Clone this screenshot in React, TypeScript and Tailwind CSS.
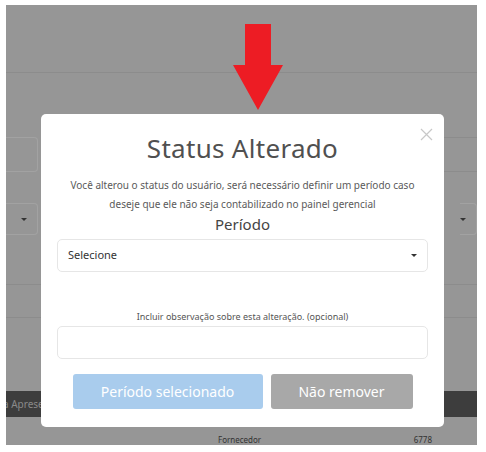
import React from "react";

export default function App() {
  const font = { fontFamily: "'Noto Sans', 'Open Sans', sans-serif" };
  return (
    <div className="relative w-[486px] h-[452px] bg-white overflow-hidden" style={font}>
      {/* backdrop page */}
      <div className="ml-[6px] mt-[5px] w-[471px] h-[440px] bg-[#969696] flex flex-col overflow-hidden">
        <div className="h-[68px] border-b border-[#8c8c8c] shrink-0" />
        <div className="h-[64px] shrink-0" />
        <div className="h-[35px] shrink-0 flex justify-between">
          <div className="w-[32px] h-full rounded-r-[4px] border border-l-0 border-[#a2a2a2]" />
          <div className="w-[33px] h-full border-y border-[#8c8c8c]" />
        </div>
        <div className="h-[31px] shrink-0" />
        <div className="h-[32px] shrink-0 flex justify-between">
          <div className="w-[32px] h-full rounded-r-[4px] border border-l-0 border-[#a2a2a2] flex items-center justify-end pr-[10px]">
            <span className="block w-0 h-0 border-l-[3px] border-r-[3px] border-t-[3px] border-l-transparent border-r-transparent border-t-[#333]" />
          </div>
          <div className="w-[17px] h-full rounded-r-[4px] border border-l-0 border-[#a2a2a2] flex items-center justify-start">
            <span className="block w-0 h-0 border-l-[3px] border-r-[3px] border-t-[3px] border-l-transparent border-r-transparent border-t-[#333]" />
          </div>
        </div>
        <div className="h-[50px] shrink-0 border-b border-[#8c8c8c]" />
        <div className="h-[33px] shrink-0 border-b border-[#8c8c8c]" />
        <div className="h-[73px] shrink-0" />
        <div className="h-[26px] shrink-0 bg-[#3d3d3d] flex items-center text-[10px] text-[#8a8a8a]">
          <span className="-ml-[3px]">a Apresentação</span>
        </div>
        <div className="h-[19px] shrink-0" />
        <div className="flex text-[8px] text-[#333] leading-[8px]">
          <span className="ml-[212px]">Fornecedor</span>
          <span className="ml-auto mr-[45px]">6778</span>
        </div>
      </div>

      {/* red arrow */}
      <svg className="absolute left-0 top-0" width="486" height="120" viewBox="0 0 486 120">
        <polygon points="245,24 271,24 271,65 283,65 258,110 233,65 245,65" fill="#ed1c24" />
      </svg>

      {/* modal */}
      <div className="absolute left-[41px] top-[114px] w-[403px] h-[313px] bg-white rounded-[5px] flex flex-col items-center px-[16px]">
        <button className="absolute left-[379px] top-[14px] w-[13px] h-[13px]">
          <svg width="13" height="13" viewBox="0 0 13 13">
            <path d="M1 1 L12 12 M12 1 L1 12" stroke="#c8c8c8" strokeWidth="1.2" />
          </svg>
        </button>
        <h1 className="mt-[18px] text-[26px] leading-[32px] text-[#505050] tracking-[0.3px]">Status Alterado</h1>
        <p className="mt-[12px] text-[10px] leading-[19px] text-[#5a5a5a] text-center">
          Você alterou o status do usuário, será necessário definir um período caso
          <br />
          deseje que ele não seja contabilizado no painel gerencial
        </p>
        <div className="text-[15px] leading-[20px] text-[#444]">Período</div>
        <div className="mt-[5px] w-full h-[33px] border border-[#e6e6e6] rounded-[5px] flex items-center justify-between pl-[10px] pr-[10px]">
          <span className="text-[11px] text-[#333]">Selecione</span>
          <span className="block w-0 h-0 border-l-[3px] border-r-[3px] border-t-[3px] border-l-transparent border-r-transparent border-t-[#333]" />
        </div>
        <div className="mt-[38px] text-[9px] leading-[14px] text-[#555]">Incluir observação sobre esta alteração. (opcional)</div>
        <div className="mt-[2px] w-full h-[33px] border border-[#e6e6e6] rounded-[5px]" />
        <div className="mt-[15px] flex gap-[8px]">
          <button className="w-[190px] h-[35px] rounded-[3px] bg-[#a9cced] text-white text-[14px]">Período selecionado</button>
          <button className="w-[142px] h-[35px] rounded-[3px] bg-[#a8a8a8] text-white text-[14px]">Não remover</button>
        </div>
      </div>
    </div>
  );
}
